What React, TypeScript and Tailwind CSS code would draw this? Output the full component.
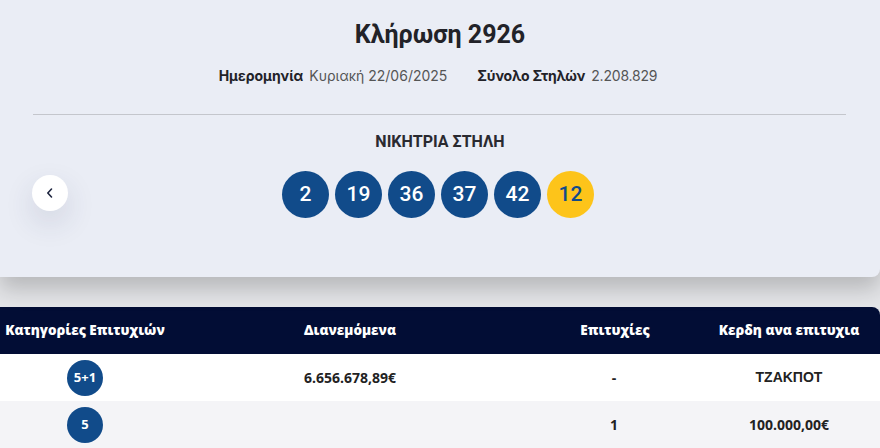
import React from "react";

const balls = ["2", "19", "36", "37", "42"];

export default function App() {
  return (
    <div className="w-[880px] h-[448px] overflow-hidden bg-[#e4e5e8] relative" style={{ fontFamily: "Inter, 'Noto Sans', sans-serif" }}>
      <div className="relative bg-[#eaedf5] h-[277px] rounded-br-[8px] shadow-[0_12px_22px_rgba(0,0,0,0.2)] z-10 flex flex-col items-center">
        <h1 className="mt-[20px] text-[25px] leading-[30px] font-bold text-[#222228]" style={{ fontFamily: "Roboto, sans-serif" }}>Κλήρωση 2926</h1>
        <div className="mt-[17px] flex items-center text-[14px] leading-[18px] text-[#222228] gap-[30px] ml-[-4px]">
          <div>
            <span className="font-bold">Ημερομηνία</span>
            <span className="ml-[6px] text-[#555]">Κυριακή 22/06/2025</span>
          </div>
          <div>
            <span className="font-bold tracking-[-0.2px]">Σύνολο Στηλών</span>
            <span className="ml-[6px] text-[#555] tracking-[-0.2px]">2.208.829</span>
          </div>
        </div>
        <div className="mt-[29px] w-[813px] ml-[-2px] h-px bg-[#c4c6cc]" />
        <div className="mt-[17px] text-[16px] leading-[20px] font-bold text-[#2a2a30]" style={{ fontFamily: "Roboto, sans-serif" }}>
          ΝΙΚΗΤΡΙΑ ΣΤΗΛΗ
        </div>
        <div className="mt-[19px] flex gap-[6px] ml-[-4px]" style={{ fontFamily: "Roboto, sans-serif" }}>
          {balls.map((b) => (
            <div key={b} className="w-[47px] h-[47px] rounded-full bg-[#114b8a] text-white flex items-center justify-center text-[21px] font-medium">
              {b}
            </div>
          ))}
          <div className="w-[47px] h-[47px] rounded-full bg-[#fdc41a] text-[#114b8a] flex items-center justify-center text-[21px] font-medium">
            12
          </div>
        </div>
        <button className="absolute left-[32px] top-[175px] w-[36px] h-[36px] rounded-full bg-white shadow-[0_12px_30px_rgba(40,50,90,0.14)] flex items-center justify-center">
          <svg width="10" height="12" viewBox="0 0 10 12" fill="none">
            <path d="M6.5 2 L2.8 6 L6.5 10" stroke="#1f2640" strokeWidth="1.6" strokeLinecap="round" strokeLinejoin="round" />
          </svg>
        </button>
      </div>
      <div className="mt-[30px] w-[880px]" style={{ fontFamily: "'Open Sans', sans-serif" }}>
        <div className="grid grid-cols-[170px_360px_168px_182px] h-[47px] bg-[#020d35] text-white rounded-tr-[8px] items-center text-[13.5px] font-extrabold">
          <div className="text-center">Κατηγορίες Επιτυχιών</div>
          <div className="text-center">Διανεμόμενα</div>
          <div className="text-center pl-[2px]">Επιτυχίες</div>
          <div className="text-center">Κερδη ανα επιτυχια</div>
        </div>
        <div className="grid grid-cols-[170px_360px_168px_182px] h-[47px] bg-white items-center text-[14px] font-bold text-[#222]">
          <div className="flex justify-center">
            <div className="w-[36px] h-[36px] rounded-full bg-[#114b8a] text-white flex items-center justify-center text-[13px]">5+1</div>
          </div>
          <div className="text-center">6.656.678,89€</div>
          <div className="text-center">-</div>
          <div className="text-center" style={{ fontFamily: "'Liberation Sans', sans-serif" }}>ΤΖΑΚΠΟΤ</div>
        </div>
        <div className="grid grid-cols-[170px_360px_168px_182px] h-[47px] bg-[#f4f4f7] items-center text-[14px] font-bold text-[#222]">
          <div className="flex justify-center">
            <div className="w-[36px] h-[36px] rounded-full bg-[#114b8a] text-white flex items-center justify-center text-[13px]">5</div>
          </div>
          <div className="text-center"></div>
          <div className="text-center">1</div>
          <div className="text-center">100.000,00€</div>
        </div>
      </div>
    </div>
  );
}
